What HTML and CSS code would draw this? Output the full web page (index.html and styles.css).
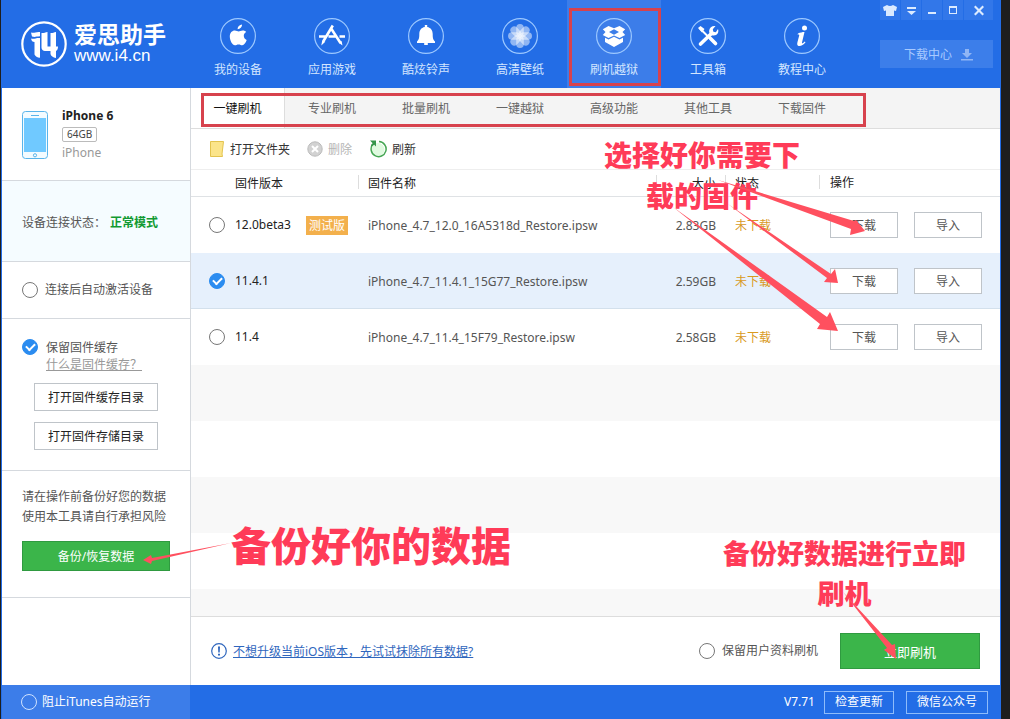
FILE: index.html
```html
<!DOCTYPE html>
<html lang="zh-CN">
<head>
<meta charset="utf-8">
<title>爱思助手</title>
<link rel="stylesheet" href="styles.css">
</head>
<body>
<div class="window">
  <header class="header">
    <div class="brand">
      <svg class="brand-mark" viewBox="0 0 48 48" aria-hidden="true">
        <circle cx="24" cy="24" r="21.700" fill="none" stroke="#fff" stroke-width="2.200"/>
        <path fill="#fff" d="M11 12.500c3 1 5-1 9-.5v4.300c-4 .2-5 1.200-8 .2zM11 18.500c3 .8 5-.8 9-.5v19.800c-3-.2-4.500-1.300-5.500-3.300V22c-2 0-3-1-3.500-3.500zM21.500 13c2 .3 3.500-.5 6-1v14.500h3V13c2 .3 3-.5 5.500-1v14.500h2c0 2.200-.5 3.500-2 4.500v7c-3-.5-5-2-5.500-4v-3H25c-2 0-3.500-1.500-3.500-3.500z"/>
      </svg>
      <div class="brand-text">
        <span class="brand-name">爱思助手</span>
        <span class="brand-url">www.i4.cn</span>
      </div>
    </div>
    <nav class="nav">
      <a class="nav-item" href="#">
        <svg class="nav-icon" viewBox="0 0 36 36"><circle class="ring" cx="18" cy="18" r="17.400"/><path fill="#fff" d="M22 6.500c.2 2.500-2 4.700-4.300 4.700-.3-2.400 2-4.600 4.300-4.700zM26.200 14c-1.600 1-2.500 2.300-2.400 4 .1 2 1.200 3.300 2.900 4-.9 2.600-2.600 5.300-4.400 5.300-1.400 0-1.900-.8-3.700-.8s-2.400.8-3.700.8c-2.500 0-5.100-4.800-5.100-8.800 0-3.700 2.300-6 5-6 1.600 0 2.900 1 3.900 1 .9 0 2.400-1.100 4.300-1 1.300 0 2.400.5 3.200 1.500z"/></svg>
        <span>我的设备</span>
      </a>
      <a class="nav-item" href="#">
        <svg class="nav-icon" viewBox="0 0 36 36"><circle class="ring" cx="18" cy="18" r="17.400"/><path fill="none" stroke="#fff" stroke-width="2.600" d="M18.800 7.500L9.500 23M16.500 9.500L26.500 25M5 18.500h7M14.500 18.500h7.500M25.500 18.500H31"/><path fill="#fff" d="M8.300 22l3 1.800-4 3.700zM24.800 24.800l2.800-1.800.9 4.500z"/></svg>
        <span>应用游戏</span>
      </a>
      <a class="nav-item" href="#">
        <svg class="nav-icon" viewBox="0 0 36 36"><circle class="ring" cx="18" cy="18" r="17.400"/><path fill="#fff" d="M16.800 7h2.400v2c3.800.7 5.500 3.500 5.500 7 0 4 .3 5.500 2.300 7.500V25h-7.200v2h-3.600v-2H9v-1.500c2-2 2.300-3.500 2.300-7.500 0-3.500 1.700-6.300 5.500-7z"/></svg>
        <span>酷炫铃声</span>
      </a>
      <a class="nav-item" href="#">
        <svg class="nav-icon" viewBox="0 0 36 36"><circle class="ring" cx="18" cy="18" r="17.400"/><g fill="#fff" fill-opacity=".5"><rect id="petal" x="14.200" y="6" width="7.600" height="12" rx="3.800"/><use href="#petal" transform="rotate(45 18 18)"/><use href="#petal" transform="rotate(90 18 18)"/><use href="#petal" transform="rotate(135 18 18)"/><use href="#petal" transform="rotate(180 18 18)"/><use href="#petal" transform="rotate(225 18 18)"/><use href="#petal" transform="rotate(270 18 18)"/><use href="#petal" transform="rotate(315 18 18)"/></g></svg>
        <span>高清壁纸</span>
      </a>
      <a class="nav-item nav-item-active" href="#" aria-current="page">
        <svg class="nav-icon" viewBox="0 0 36 36"><circle class="ring" cx="18" cy="18" r="17.400"/><path fill="#fff" fill-rule="evenodd" d="M12.500 8l5.500 2.200L23.500 8l5.700 3.300-2.700 2.700 2.700 3-5.700 3-5.500-2.500-5.500 2.500-5.700-3 2.700-3-2.700-2.700zM18 11.200l-5 2.800 5 2.700 5-2.700zM9 19.800l3.500 1.700 5.500-2.700 5.500 2.700 3.500-1.700V24l-9 5-9-5z"/></svg>
        <span>刷机越狱</span>
      </a>
      <a class="nav-item" href="#">
        <svg class="nav-icon" viewBox="0 0 36 36"><circle class="ring" cx="18" cy="18" r="17.400"/><path fill="none" stroke="#fff" stroke-width="2" d="M10 10.500l9 9"/><path fill="none" stroke="#fff" stroke-width="3.600" stroke-linecap="round" d="M20.500 20.500l5 5M22 15L10.500 26"/><path fill="#fff" d="M8 10l2.500-2 4 3-2.500 3.500zM25.500 8l-2.700 3.200.5 2.500 2.500.5L28 11c1.200 3-.7 6.500-4.200 6.500-3.300 0-5-2.500-4.600-5 .3-3 3-5 6.300-4.500z"/></svg>
        <span>工具箱</span>
      </a>
      <a class="nav-item" href="#">
        <svg class="nav-icon" viewBox="0 0 36 36"><circle class="ring" cx="18" cy="18" r="17.400"/><circle cx="20.500" cy="10" r="2.500" fill="#fff"/><path fill="#fff" d="M14 15.500c2-1 4.500-1.500 6.500-1.500L18 24.500c-.2 1 .3 1 .8.700l2-1.700.7.800c-2 2.500-4 3.700-6 3.700-2.500 0-2.500-2-2-4l1.700-6.500c.2-1-.2-1.200-1.700-1z"/></svg>
        <span>教程中心</span>
      </a>
    </nav>
    <div class="header-side">
      <div class="window-controls">
        <button class="control" type="button" aria-label="皮肤"><svg viewBox="0 0 20 20"><path d="M7 5q3 2 6 0l4 2-1 4-2-.5V16H6v-5.500L4 11 3 7z"/></svg></button>
        <button class="control" type="button" aria-label="菜单"><svg viewBox="0 0 20 20"><path d="M6 7h9v2H6zM6 11h9l-4.500 4z"/></svg></button>
        <button class="control" type="button" aria-label="最小化"><svg viewBox="0 0 20 20"><path d="M6 12h8v2H6z"/></svg></button>
        <button class="control" type="button" aria-label="最大化"><svg viewBox="0 0 20 20"><path fill-rule="evenodd" d="M6 6h8v8H6zM7 8v5h6V8z"/></svg></button>
        <button class="control control-close" type="button" aria-label="关闭"><svg viewBox="0 0 20 20"><path d="M5 7l1.500-1.500L10 9l3.500-3.500L15 7l-3.500 3.500L15 14l-1.500 1.500L10 12l-3.500 3.500L5 14l3.500-3.500z"/></svg></button>
      </div>
      <button class="download-center" type="button"><span>下载中心</span><svg viewBox="0 0 12 12" width="12" height="12" aria-hidden="true"><path fill="#8fb5f5" d="M4 0h4v4h3L6 9 1 4h3zM0 10h12v1.500H0z"/></svg></button>
    </div>
  </header>

  <div class="body">
    <aside class="sidebar">
      <section class="device">
        <svg class="phone" viewBox="0 0 26 48" aria-hidden="true"><rect x=".5" y=".5" width="25" height="47" rx="3" fill="#f3fbff" stroke="#59b4ea"/><path fill="#70c9ff" d="M2 7h22v34H2z"/><path stroke="#59b4ea" d="M9 4.500h8"/><circle cx="13" cy="44.300" r="1.600" fill="none" stroke="#59b4ea"/></svg>
        <div class="device-info">
          <strong class="device-name">iPhone 6</strong>
          <span class="capacity">64GB</span>
          <span class="device-model">iPhone</span>
        </div>
      </section>
      <section class="status"><span>设备连接状态：</span><strong class="status-mode">正常模式</strong></section>
      <section class="activate"><label class="option"><input class="tick" type="checkbox">连接后自动激活设备</label></section>
      <section class="cache">
        <div class="cache-keep">
          <input class="tick" type="checkbox" id="keep-cache" checked>
          <div class="cache-text">
            <label for="keep-cache">保留固件缓存</label>
            <a class="cache-help" href="#">什么是固件缓存？</a>
          </div>
        </div>
        <button class="btn folder-btn" type="button">打开固件缓存目录</button>
        <button class="btn folder-btn" type="button">打开固件存储目录</button>
      </section>
      <section class="backup">
        <p class="backup-note">请在操作前备份好您的数据<br>使用本工具请自行承担风险</p>
        <button class="green backup-btn" type="button">备份/恢复数据</button>
      </section>
    </aside>

    <main class="main">
      <nav class="tabs">
        <a class="tab tab-active" href="#" aria-current="page">一键刷机</a>
        <a class="tab" href="#">专业刷机</a>
        <a class="tab" href="#">批量刷机</a>
        <a class="tab" href="#">一键越狱</a>
        <a class="tab" href="#">高级功能</a>
        <a class="tab" href="#">其他工具</a>
        <a class="tab" href="#">下载固件</a>
        <div class="tabs-frame"></div>
      </nav>
      <div class="toolbar">
        <button class="tool" type="button"><svg viewBox="0 0 16 16" width="16" height="16"><path fill="#fbe48a" stroke="#e3c34e" d="M1.500.5h13L13 13l.5 2.500h-12z"/></svg><span>打开文件夹</span></button>
        <button class="tool tool-disabled" type="button" disabled><svg viewBox="0 0 16 16" width="16" height="16"><circle cx="8" cy="8" r="7.200" fill="#d2d2d2" stroke="#bbb"/><path stroke="#fff" stroke-width="2" d="M5 5l6 6M11 5l-6 6"/></svg><span>删除</span></button>
        <button class="tool" type="button"><svg viewBox="0 0 18 18" width="18" height="18"><circle cx="9" cy="9.500" r="6.500" fill="#e0fae0"/><path fill="none" stroke="#45a653" stroke-width="1.500" d="M10 1.600a7.500 7.500 0 1 1-6 2.500"/><path fill="#36964a" d="M1 .5h6v6L5.200 4.700 2.500 6.500 2 5l1.700-1.800z"/></svg><span>刷新</span></button>
      </div>
      <div class="list">
        <table class="firmware">
          <colgroup><col class="col-version"><col><col class="col-size"><col class="col-status"><col class="col-ops"></colgroup>
          <thead>
            <tr><th class="version-head">固件版本</th><th>固件名称</th><th class="size">大小</th><th>状态</th><th>操作</th></tr>
          </thead>
          <tbody>
            <tr>
              <td><label class="version"><input class="tick" type="radio" name="fw">12.0beta3<span class="badge">测试版</span></label></td>
              <td>iPhone_4.7_12.0_16A5318d_Restore.ipsw</td><td class="size">2.83GB</td><td class="pending">未下载</td>
              <td><div class="ops"><button class="btn" type="button">下载</button><button class="btn" type="button">导入</button></div></td>
            </tr>
            <tr class="selected">
              <td><label class="version"><input class="tick" type="radio" name="fw" checked>11.4.1</label></td>
              <td>iPhone_4.7_11.4.1_15G77_Restore.ipsw</td><td class="size">2.59GB</td><td class="pending">未下载</td>
              <td><div class="ops"><button class="btn" type="button">下载</button><button class="btn" type="button">导入</button></div></td>
            </tr>
            <tr>
              <td><label class="version"><input class="tick" type="radio" name="fw">11.4</label></td>
              <td>iPhone_4.7_11.4_15F79_Restore.ipsw</td><td class="size">2.58GB</td><td class="pending">未下载</td>
              <td><div class="ops"><button class="btn" type="button">下载</button><button class="btn" type="button">导入</button></div></td>
            </tr>
          </tbody>
        </table>
        <div class="stripes"></div>
      </div>
      <div class="action-bar">
        <svg viewBox="0 0 16 16" width="16" height="16" aria-hidden="true"><circle cx="8" cy="8" r="7.300" fill="none" stroke="#2f66bd" stroke-width="1.200"/><path fill="#2f66bd" d="M7 3.500h2l-.3 6H7.300zM7 10.700h2v1.800H7z"/></svg>
        <a class="erase-link" href="#">不想升级当前iOS版本，先试试抹除所有数据?</a>
        <label class="option keep-data"><input class="tick" type="checkbox">保留用户资料刷机</label>
        <button class="green flash-btn" type="button">立即刷机</button>
      </div>
    </main>
  </div>

  <footer class="footer">
    <label class="option footer-left"><input class="tick tick-light" type="checkbox">阻止iTunes自动运行</label>
    <span class="app-version">V7.71</span>
    <button class="footer-btn" type="button">检查更新</button>
    <button class="footer-btn" type="button">微信公众号</button>
  </footer>
</div>

<p class="note note-choose">选择好你需要下<br>载的固件</p>
<p class="note note-backup">备份好你的数据</p>
<p class="note note-flash">备份好数据进行立即<br>刷机</p>
<svg class="arrows" width="1010" height="719" viewBox="0 0 1010 719" aria-hidden="true">
  <path d="M718 180L854 221l2-1 9 11-15 4 1-6z"/>
  <path d="M728 204L831 274l4-5 3 14-14-1 3-4z"/>
  <path d="M673 207L827 317l3-5 8 19-21-2 3-5z"/>
  <path d="M231 543L152 558l-1-3-8 5 8 4 1-3z"/>
  <path d="M843 592L892 645l3-1 1 15-12-9 3-2z"/>
</svg>
</body>
</html>
```
FILE: styles.css
```css
* { box-sizing: border-box; }
body {
  margin: 0;
  padding: 0 9px 0 1px;
  background: #1e1e1e;
  color: #555;
  font: 12px/20px "Noto Sans", "Noto Sans CJK SC", sans-serif;
}
button { font: inherit; color: inherit; padding: 0; border: 0; background: none; white-space: nowrap; }
a { color: inherit; text-decoration: none; }
p { margin: 0; }

.window {
  display: flex;
  flex-direction: column;
  min-height: 100vh;
  background: #fff;
  border: solid #236de6;
  border-width: 0 1px;
}

.header { display: flex; height: 88px; background: #236de6; color: #d3e6ff; }
.brand { display: flex; flex: none; align-items: center; gap: 6px; width: 189px; padding-left: 18px; }
.brand-mark { width: 48px; height: 48px; }
.brand-text { display: flex; flex-direction: column; color: #fff; }
.brand-name { font-size: 23px; line-height: 24px; font-weight: 700; }
.brand-url { font: 17px/20px "Liberation Sans", sans-serif; }
.nav { display: flex; flex: 1; }
.nav-item {
  position: relative;
  display: flex;
  flex-direction: column;
  align-items: center;
  gap: 6px;
  width: 94px;
  padding-top: 18px;
}
.nav-item-active { background: #3c7de9; }
.nav-item-active::after { content: ""; position: absolute; inset: 8px 0 2px 2px; border: 3px solid #d7424d; }
.nav-icon { width: 36px; height: 36px; }
.ring { fill: none; stroke: #9cc8ff; stroke-width: 1.2px; }
.header-side { display: flex; flex-direction: column; gap: 20px; width: 113px; margin-right: 7px; }
.window-controls { display: flex; gap: 1px; height: 20px; }
.control { display: flex; justify-content: center; width: 20px; background: #3277e9; }
.control svg { width: 20px; height: 20px; fill: #dcebff; }
.control-close { flex: 1; }
.download-center { display: flex; align-items: center; justify-content: center; gap: 9px; height: 28px; padding: 1px 0 0 4px; background: #3c7eea; color: #a9caff; }

.body { display: flex; flex: 1; }
.sidebar { flex: none; width: 189px; border-right: 1px solid #d5d9de; }
.sidebar > section { border-bottom: 1px solid #d5d9de; }
.device { display: flex; gap: 14px; height: 93px; padding: 18px 20px; }
.phone { width: 26px; height: 48px; margin-top: 5px; }
.device-info { display: flex; flex-direction: column; align-items: flex-start; color: #999; }
.device-name { color: #222; }
.capacity { margin: 1px 0; padding: 0 4px; border: 1px solid #bbb; border-radius: 2px; font-size: 10px; line-height: 13px; color: #444; }
.status { display: flex; align-items: center; height: 81px; padding: 4px 20px 0; background: #f5fcff; }
.status-mode { margin-left: 4px; color: #119a32; }
.activate { display: flex; align-items: center; height: 57px; padding-left: 20px; }
.option { display: flex; align-items: center; gap: 7px; white-space: nowrap; }
.tick {
  flex: none;
  appearance: none;
  display: grid;
  place-content: center;
  width: 16px;
  height: 16px;
  margin: 0;
  border: 1px solid #777;
  border-radius: 50%;
  background: #fff;
}
.tick:checked { border-color: #2b8cf0; background: #2b8cf0; }
.tick:checked::after { content: ""; width: 7px; height: 4px; margin-bottom: 2px; border: solid #fff; border-width: 0 0 2px 2px; transform: rotate(-45deg); }
.cache { display: flex; flex-direction: column; align-items: center; height: 152px; padding-top: 20px; }
.cache-keep { display: flex; align-self: stretch; gap: 8px; padding-left: 20px; margin-bottom: 10px; }
.cache-text { display: flex; flex-direction: column; line-height: 17px; }
.cache-help { color: #999; text-decoration: underline; }
.btn { padding-top: 2px; border: 1px solid #bfc4c9; background: #fff; }
.folder-btn { width: 124px; height: 28px; margin-bottom: 11px; color: #222; }
.backup { height: 127px; padding: 16px 20px; }
.backup-note { white-space: nowrap; margin-bottom: 14px; }
.green { padding-top: 2px; border: 1px solid #2f9a40; background: #3bb54a; color: #fff; }
.backup-btn { width: 148px; height: 30px; }

.main { display: flex; flex: 1; flex-direction: column; min-width: 0; }
.tabs { position: relative; display: flex; height: 41px; background: #f4f4f4; border-bottom: 1px solid #ddd; color: #666; }
.tab { width: 94px; line-height: 42px; height: 40px; text-align: center; }
.tab-active { background: #fff; color: #111; border-right: 1px solid #ddd; }
.tabs-frame { position: absolute; left: 10px; top: 5px; width: 665px; height: 34px; border: 3px solid #d7424d; }
.toolbar { display: flex; gap: 17px; height: 41px; padding-left: 18px; border-bottom: 1px solid #eee; color: #333; }
.tool { display: flex; align-items: center; gap: 5px; }
.tool span { padding-top: 2px; }
.tool-disabled { color: #b5b5b5; }
.list { display: flex; flex: 1; flex-direction: column; }
.firmware { width: 100%; table-layout: fixed; border-collapse: separate; border-spacing: 0; }
.col-version { width: 167px; }
.col-size { width: 69px; }
.col-status { width: 94px; }
.col-ops { width: 181px; }
.firmware th { position: relative; height: 27px; padding: 2px 10px 0; border-bottom: 1px solid #dfe2e5; text-align: left; font-weight: 400; color: #222; }
.firmware th + th::before { content: ""; position: absolute; left: 0; top: 5px; height: 14px; border-left: 1px solid #ddd; }
.firmware .version-head { padding-left: 44px; }
.firmware td { height: 56px; padding: 2px 10px 0; white-space: nowrap; }
.firmware td:first-child { padding: 0 0 0 18px; }
.firmware td:last-child, .firmware th:last-child { padding: 0 0 0 11px; }
.firmware .size { padding-left: 0; padding-right: 9px; text-align: right; }
.firmware .pending { color: #d99a1f; }
.selected td { background: #e6f0fc; border-bottom: 1px solid #d3e0ec; }
.version { display: flex; align-items: center; gap: 10px; color: #222; }
.badge { margin-left: 5px; padding: 0 3px; background: #f3b04c; color: #fff; line-height: 19px; }
.ops { display: flex; gap: 16px; }
.ops .btn { width: 68px; height: 26px; }
.stripes { flex: 1; background: repeating-linear-gradient(#f8f8f8 0 56px, #fff 56px 112px); }
.action-bar { display: flex; align-items: center; height: 69px; padding: 0 20px; border-top: 1px solid #ddd; }
.erase-link { margin-left: 6px; padding-top: 2px; color: #2f66bd; text-decoration: underline; white-space: nowrap; }
.keep-data { margin-left: auto; }
.flash-btn { width: 140px; height: 36px; margin-left: 22px; font-size: 13px; }

.footer { display: flex; align-items: center; height: 34px; padding-right: 12px; background: #236de6; color: #fff; }
.footer-left { align-self: stretch; width: 188px; padding-left: 19px; background: #3c7de9; gap: 5px; }
.tick-light { background: transparent; border-color: #cfe2ff; }
.app-version { margin-left: auto; margin-right: 9px; }
.footer-btn { height: 23px; padding: 0 10px; border: 1px solid #8fbcfa; }
.footer-btn + .footer-btn { margin-left: 12px; }

.note { position: absolute; color: #ff3b58; font-family: "Noto Sans CJK SC", sans-serif; font-weight: 900; text-align: center; white-space: nowrap; }
.note-choose { left: 604px; top: 134px; font-size: 28px; line-height: 41px; }
.note-backup { left: 231px; top: 514px; font-size: 40px; line-height: 60px; }
.note-flash { left: 723px; top: 533px; font-size: 27px; line-height: 40px; }
.arrows { position: absolute; left: 0; top: 0; fill: #ff505f; pointer-events: none; }
```
